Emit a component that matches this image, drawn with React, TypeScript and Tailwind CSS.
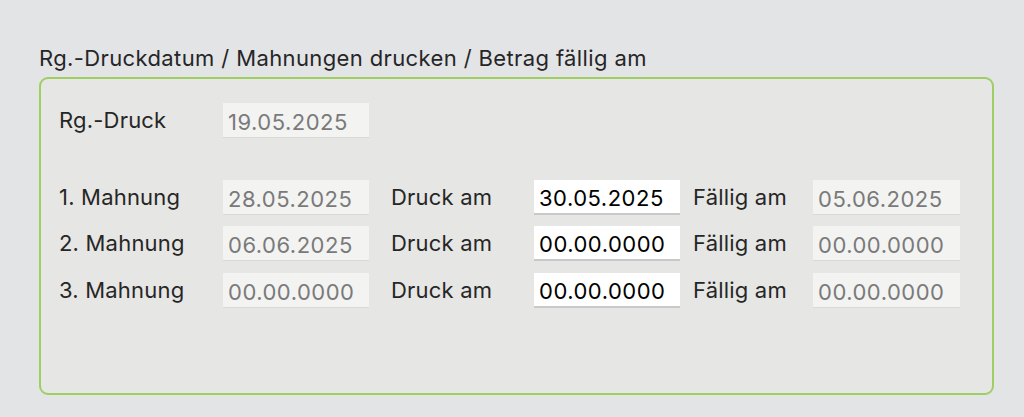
import React from "react";

const font = { fontFamily: "Inter, 'Noto Sans', sans-serif" };

function Ro({ v, w = "w-[146px]" }: { v: string; w?: string }) {
  return (
    <div className={`${w} h-[35px] bg-[#f3f3f2] border-b border-[#d9d9d8] pl-[5px] text-[22px] tracking-[0.5px] leading-[38px] text-[#7a7a7a]`}>
      {v}
    </div>
  );
}

function Ed({ v }: { v: string }) {
  return (
    <div className="w-[146px] h-[35px] bg-white border-b-2 border-[#c9c9c9] pl-[5px] text-[22px] tracking-[0.5px] leading-[37px] text-black">
      {v}
    </div>
  );
}

function Label({ t, w }: { t: string; w: string }) {
  return <div className={`${w} text-[22px] tracking-[0.2px] leading-[35px] text-[#262626]`}>{t}</div>;
}

export default function App() {
  const rows = [
    ["1. Mahnung", "28.05.2025", "30.05.2025", "05.06.2025"],
    ["2. Mahnung", "06.06.2025", "00.00.0000", "00.00.0000"],
    ["3. Mahnung", "00.00.0000", "00.00.0000", "00.00.0000"],
  ];
  return (
    <div className="w-[1024px] h-[417px] bg-[#e3e4e6] pt-[46px] pl-[39px]" style={font}>
      <div className="h-[24px] leading-[24px] text-[22px] tracking-[0.38px] text-[#262626]">
        Rg.-Druckdatum / Mahnungen drucken / Betrag fällig am
      </div>
      <div className="mt-[7px] w-[955px] h-[318px] border-2 border-[#9fce63] rounded-[9px] bg-[#e6e6e4] pt-[24px] pl-[18px]">
        <div className="flex items-center h-[35px]">
          <Label t="Rg.-Druck" w="w-[164px]" />
          <Ro v="19.05.2025" />
        </div>
        <div className="mt-[42px] flex flex-col">
          {rows.map((r, i) => (
            <div key={i} className={`flex items-center h-[35px] ${i === 1 ? "mt-[11px]" : i === 2 ? "mt-[12px]" : ""}`}>
              <Label t={r[0]} w="w-[164px]" />
              <Ro v={r[1]} />
              <div className="w-[22px]" />
              <Label t="Druck am" w="w-[143px]" />
              <Ed v={r[2]} />
              <div className="w-[13px]" />
              <Label t="Fällig am" w="w-[120px]" />
              <Ro v={r[3]} w="w-[147px]" />
            </div>
          ))}
        </div>
      </div>
    </div>
  );
}
